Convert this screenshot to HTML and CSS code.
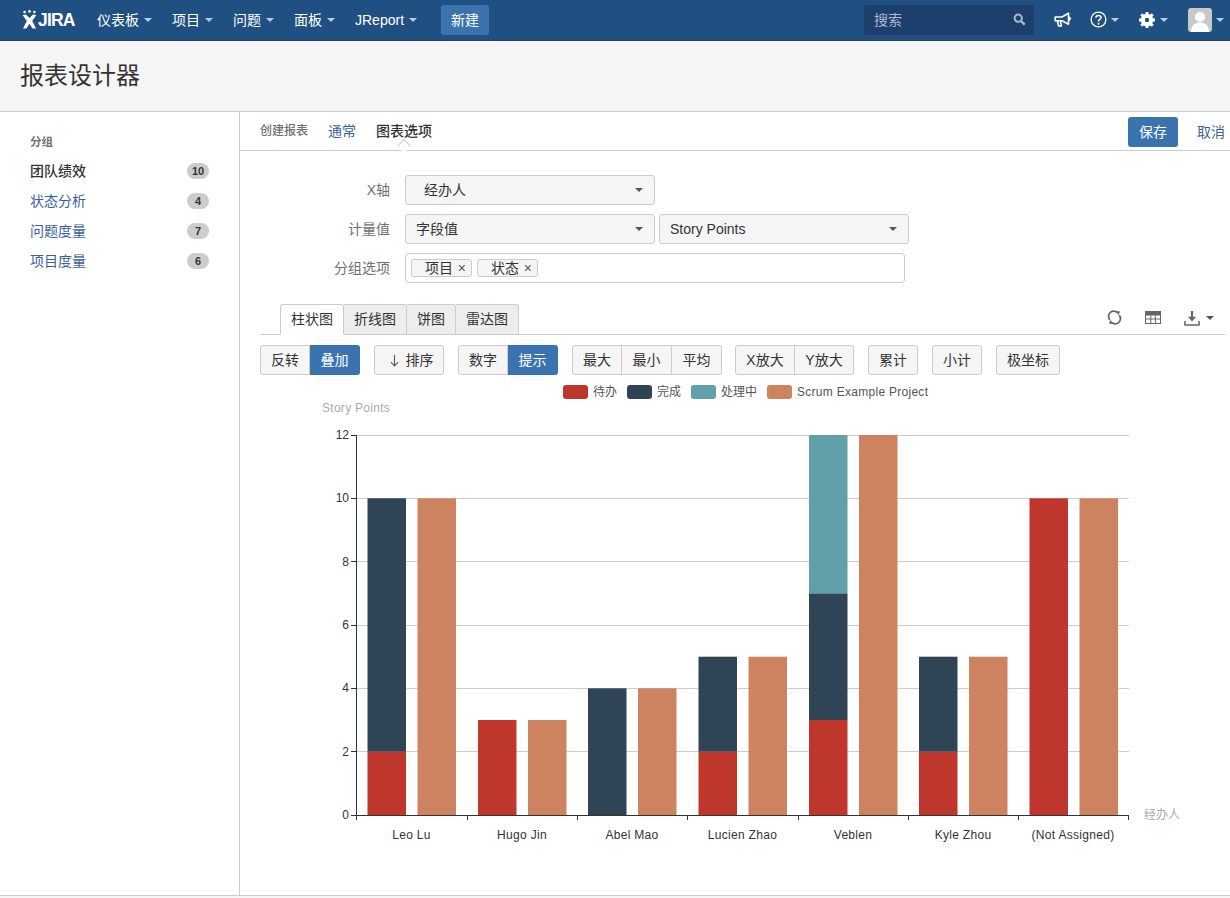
FILE: index.html
```html
<!DOCTYPE html>
<html lang="zh-CN">
<head>
<meta charset="utf-8">
<title>报表设计器</title>
<link rel="stylesheet" href="styles.css">
</head>
<body>
<header class="topbar">
  <a class="logo">
    <svg class="logo-mark" viewBox="0 0 15 19" width="15" height="19"><circle cx="2.6" cy="2" r="1.3"/><circle cx="7.5" cy="1.4" r="1.3"/><circle cx="12.4" cy="2" r="1.3"/><path d="M0.6 5 L4 4.5 L7.5 8 L11 4.5 L14.4 5 L10.2 11 L14 18.4 L10.6 18.4 L7.5 13.8 L4.4 18.4 L1 18.4 L4.8 11 Z"/></svg>
    <span class="logo-text">JIRA</span>
  </a>
  <nav class="nav">
    <a class="nav-item">仪表板<i class="caret"></i></a>
    <a class="nav-item">项目<i class="caret"></i></a>
    <a class="nav-item">问题<i class="caret"></i></a>
    <a class="nav-item">面板<i class="caret"></i></a>
    <a class="nav-item">JReport<i class="caret"></i></a>
  </nav>
  <a class="create">新建</a>
  <div class="tools">
    <div class="search">
      <span>搜索</span>
      <svg viewBox="0 0 14 14" width="13" height="13"><circle cx="5.6" cy="5.6" r="3.9" fill="none" stroke="#a9b8cc" stroke-width="2.2"/><path d="M8.6 8.6 L12.6 12.6" stroke="#a9b8cc" stroke-width="2.6"/></svg>
    </div>
    <a class="tool tool-first"><svg viewBox="0 0 17 16" width="17" height="16"><path d="M1.2 5 H8 L14.5 1.2 V12.2 L8 8.8 H1.2 Z M3.4 9 L4.6 14 H7.4 L6.3 9 M15 5 L16.4 6.6 L15 8.2" fill="none" stroke="#fff" stroke-width="1.6" stroke-linejoin="round"/></svg></a>
    <a class="tool tool-help"><svg viewBox="0 0 17 17" width="17" height="17"><circle cx="8.5" cy="8.5" r="7.4" fill="none" stroke="#fff" stroke-width="1.3"/><path d="M5.9 6.7 C5.9 3.7 11.1 3.7 11.1 6.6 C11.1 8.5 8.5 8.4 8.5 10.4" fill="none" stroke="#fff" stroke-width="1.5"/><circle cx="8.5" cy="12.7" r="1" fill="#fff"/></svg><i class="caret"></i></a>
    <a class="tool tool-gear"><svg viewBox="0 0 18 18" width="18" height="18"><circle cx="9" cy="9" r="4.6" fill="none" stroke="#fff" stroke-width="3.4"/><path d="M9 1 V17 M1 9 H17 M3.3 3.3 L14.7 14.7 M14.7 3.3 L3.3 14.7" stroke="#fff" stroke-width="3"/><circle cx="9" cy="9" r="2.2" fill="#205081"/></svg><i class="caret"></i></a>
    <a class="tool tool-avatar">
      <svg class="avatar" viewBox="0 0 24 24" width="24" height="24"><rect width="24" height="24" rx="3" fill="#c9c9c9"/><circle cx="12" cy="9" r="5" fill="#fff"/><path d="M3 24 C3 16 8 14.5 12 14.5 C16 14.5 21 16 21 24 Z" fill="#fff"/></svg><i class="caret"></i></a>
  </div>
</header>

<div class="page-head"><h1>报表设计器</h1></div>

<div class="content">
  <aside class="side">
    <h2>分组</h2>
    <ul class="side-list">
      <li class="side-item active"><span>团队绩效</span><b class="count">10</b></li>
      <li class="side-item"><span>状态分析</span><b class="count">4</b></li>
      <li class="side-item"><span>问题度量</span><b class="count">7</b></li>
      <li class="side-item"><span>项目度量</span><b class="count">6</b></li>
    </ul>
  </aside>

  <main class="main">
    <div class="steps">
      <span class="steps-title">创建报表</span>
      <a class="step">通常</a>
      <a class="step current">图表选项</a>
      <div class="steps-actions">
        <a class="save">保存</a>
        <a class="cancel">取消</a>
      </div>
    </div>

    <form class="form">
      <div class="row">
        <label>X轴</label>
        <div class="select wide indent">经办人<i class="caret dark"></i></div>
      </div>
      <div class="row">
        <label>计量值</label>
        <div class="select wide">字段值<i class="caret dark"></i></div>
        <div class="select wide">Story Points<i class="caret dark"></i></div>
      </div>
      <div class="row">
        <label>分组选项</label>
        <div class="multi">
          <span class="chip">项目<em>×</em></span>
          <span class="chip">状态<em>×</em></span>
        </div>
      </div>
    </form>

    <div class="chart-tabs">
      <a class="chart-tab selected">柱状图</a>
      <a class="chart-tab">折线图</a>
      <a class="chart-tab t49">饼图</a>
      <a class="chart-tab">雷达图</a>
      <div class="chart-tools">
        <svg viewBox="0 0 16 16" width="15" height="15"><path d="M3 10.5 A5.6 5.6 0 0 1 11.5 3.2 M13 5.5 A5.6 5.6 0 0 1 4.5 12.8" fill="none" stroke="#666" stroke-width="1.9"/><path d="M10 1 L14 1.5 L12 5.5 Z M6 15 L2 14.5 L4 10.5 Z" fill="#666"/></svg>
        <svg class="tool-table" viewBox="0 0 16 13" width="16" height="13"><rect width="16" height="13" fill="#666"/><path d="M1 4.5 H15 V12 H1 Z" fill="#fff"/><path d="M5.8 4.5 V12 M10.4 4.5 V12 M1 8 H15" stroke="#666"/></svg>
        <span class="tool-down"><svg viewBox="0 0 16 16" width="16" height="16"><path d="M8 1 V9" stroke="#666" stroke-width="2.2"/><path d="M3.8 6.8 H12.2 L8 11.4 Z" fill="#666"/><path d="M1 11 V15 H15 V11" fill="none" stroke="#666" stroke-width="1.6"/></svg><i class="caret dark"></i></span>
      </div>
    </div>

    <div class="toolbar">
      <div class="group"><a class="btn">反转</a><a class="btn on">叠加</a></div>
      <div class="group"><a class="btn sort"><svg viewBox="0 0 9 13" width="9" height="13"><path d="M4.5 1 V11.5 M1 8.2 L4.5 12 L8 8.2" fill="none" stroke="#555" stroke-width="1.1"/></svg>排序</a></div>
      <div class="group"><a class="btn">数字</a><a class="btn on">提示</a></div>
      <div class="group"><a class="btn">最大</a><a class="btn">最小</a><a class="btn">平均</a></div>
      <div class="group zoom"><a class="btn">X放大</a><a class="btn">Y放大</a></div>
      <div class="group"><a class="btn">累计</a></div>
      <div class="group"><a class="btn">小计</a></div>
      <div class="group"><a class="btn ext">极坐标</a></div>
    </div>

    <svg class="chart" viewBox="260 380 970 480" width="970" height="480">
      <g class="legend">
        <rect class="c-red" x="563" y="385" width="25" height="14" rx="3"/><text x="593" y="396">待办</text>
        <rect class="c-navy" x="627" y="385" width="25" height="14" rx="3"/><text x="657" y="396">完成</text>
        <rect class="c-teal" x="691" y="385" width="25" height="14" rx="3"/><text x="721" y="396">处理中</text>
        <rect class="c-orange" x="767" y="385" width="25" height="14" rx="3"/><text class="latin" x="797" y="396">Scrum Example Project</text>
      </g>
      <text class="axis-name latin" x="322" y="412">Story Points</text>
      <g class="grid">
        <path d="M356 435.5H1129M356 498.5H1129M356 561.5H1129M356 625.5H1129M356 688.5H1129M356 751.5H1129"/>
      </g>
      <g class="bars">
        <rect class="c-red" x="367.5" y="751.7" width="38.5" height="63.3"/>
        <rect class="c-navy" x="367.5" y="498.3" width="38.5" height="253.4"/>
        <rect class="c-orange" x="417.5" y="498.3" width="38.5" height="316.7"/>

        <rect class="c-red" x="478" y="720" width="38.5" height="95"/>
        <rect class="c-orange" x="528" y="720" width="38.5" height="95"/>

        <rect class="c-navy" x="588" y="688.3" width="38.5" height="126.7"/>
        <rect class="c-orange" x="638" y="688.3" width="38.5" height="126.7"/>

        <rect class="c-red" x="698.5" y="751.7" width="38.5" height="63.3"/>
        <rect class="c-navy" x="698.5" y="656.7" width="38.5" height="95"/>
        <rect class="c-orange" x="748.5" y="656.7" width="38.5" height="158.3"/>

        <rect class="c-red" x="809" y="720" width="38.5" height="95"/>
        <rect class="c-navy" x="809" y="593.3" width="38.5" height="126.7"/>
        <rect class="c-teal" x="809" y="435" width="38.5" height="158.3"/>
        <rect class="c-orange" x="859" y="435" width="38.5" height="380"/>

        <rect class="c-red" x="919" y="751.7" width="38.5" height="63.3"/>
        <rect class="c-navy" x="919" y="656.7" width="38.5" height="95"/>
        <rect class="c-orange" x="969" y="656.7" width="38.5" height="158.3"/>

        <rect class="c-red" x="1029.5" y="498.3" width="38.5" height="316.7"/>
        <rect class="c-orange" x="1079.5" y="498.3" width="38.5" height="316.7"/>
      </g>
      <path class="axis" d="M356.5 435V815.5H1129M351 435.5H356M351 498.5H356M351 561.5H356M351 625.5H356M351 688.5H356M351 751.5H356M351 815.5H356M356.5 815V820M467.5 815V820M577.5 815V820M687.5 815V820M798.5 815V820M908.5 815V820M1018.5 815V820M1128.5 815V820"/>
      <g class="y-labels">
        <text x="349" y="439">12</text>
        <text x="349" y="502">10</text>
        <text x="349" y="566">8</text>
        <text x="349" y="629">6</text>
        <text x="349" y="692">4</text>
        <text x="349" y="756">2</text>
        <text x="349" y="819">0</text>
      </g>
      <g class="x-labels">
        <text x="411.5" y="839">Leo Lu</text>
        <text x="522" y="839">Hugo Jin</text>
        <text x="632" y="839">Abel Mao</text>
        <text x="742.5" y="839">Lucien Zhao</text>
        <text x="853" y="839">Veblen</text>
        <text x="963" y="839">Kyle Zhou</text>
        <text x="1073" y="839">(Not Assigned)</text>
      </g>
      <text class="axis-name" x="1144" y="819">经办人</text>
    </svg>
  </main>
</div>
<footer class="foot"></footer>
</body>
</html>
```

FILE: styles.css
```css
* { box-sizing: border-box; }
html, body { margin: 0; height: 100%; }
body {
  display: flex;
  flex-direction: column;
  height: 898px;
  overflow: hidden;
  background: #fff;
  color: #333;
  font: 14px/20px "Liberation Sans", "Noto Sans CJK SC", sans-serif;
}
a { color: inherit; text-decoration: none; }
h1, h2, ul { margin: 0; padding: 0; font-weight: normal; }
ul { list-style: none; }

.caret {
  display: inline-block;
  width: 0;
  height: 0;
  border: 4px solid transparent;
  border-top-color: #fff;
  border-bottom-width: 0;
  opacity: .7;
}
.caret.dark { border-top-color: #555; opacity: 1; }

/* top bar */
.topbar {
  flex: none;
  display: flex;
  align-items: center;
  height: 41px;
  padding: 0 0 1px 22px;
  background: #205081;
  border-bottom: 1px solid #2a3f5c;
  color: #fff;
}
.logo { display: flex; align-items: center; width: 75px; }
.logo-mark { fill: #fff; margin-right: 1px; }
.logo-text { font-size: 17.5px; font-weight: bold; letter-spacing: -.8px; line-height: 20px; }
.nav { display: flex; gap: 20px; }
.nav-item { display: flex; align-items: center; gap: 5px; }
.create {
  width: 48px;
  height: 30px;
  margin-left: 24px;
  background: #3b73af;
  border-radius: 3px;
  text-align: center;
  line-height: 30px;
}
.tools { display: flex; align-items: center; margin-left: auto; }
.search {
  display: flex;
  align-items: center;
  justify-content: space-between;
  width: 170px;
  height: 30px;
  padding: 0 8px 0 10px;
  background: #1d3f6e;
  border-radius: 3px;
  color: #a9b8cc;
}
.tool { display: flex; align-items: center; gap: 4px; }
.tool-first { margin-left: 20px; }
.tool-help { margin-left: 19px; }
.tool-gear { margin-left: 19px; }
.tool-avatar { margin-left: 20px; width: 42px; }
.avatar { flex: none; }

/* page heading */
.page-head {
  flex: none;
  height: 71px;
  padding: 0 20px;
  background: #f5f5f5;
  border-bottom: 1px solid #ccc;
}
.page-head h1 { font-size: 24px; line-height: 69px; color: #333; }

.content { flex: 1; display: flex; min-height: 0; }

/* sidebar */
.side {
  flex: none;
  width: 240px;
  padding: 22px 30px 0;
  border-right: 1px solid #ccc;
}
.side h2 { font-size: 11.5px; font-weight: bold; line-height: 16px; color: #707070; margin-bottom: 6px; }
.side-item {
  display: flex;
  align-items: center;
  justify-content: space-between;
  height: 30px;
  color: #3b5f9e;
}
.side-item.active { color: #333; font-weight: 500; }
.count {
  width: 22px;
  height: 16px;
  background: #ccc;
  border-radius: 8px;
  color: #333;
  font-size: 11px;
  line-height: 16px;
  text-align: center;
}

/* main */
.main { flex: 1; min-width: 0; }
.steps {
  display: flex;
  align-items: center;
  height: 39px;
  padding-left: 20px;
  border-bottom: 1px solid #ccc;
}
.steps-title { font-size: 12px; font-weight: 500; color: #707070; width: 68px; }
.step { color: #3b5f9e; margin-right: 20px; }
.step.current { color: #333; font-weight: 500; position: relative; }
.step.current::after {
  content: "";
  position: absolute;
  left: 23px;
  bottom: -10px;
  width: 9px;
  height: 9px;
  background: #fff;
  border-left: 1px solid #ccc;
  border-top: 1px solid #ccc;
  transform: rotate(45deg);
}
.steps-actions { display: flex; align-items: center; margin: 2px 0 0 auto; padding-right: 5px; }
.save {
  width: 50px;
  height: 30px;
  background: #3b73af;
  border-radius: 3px;
  color: #fff;
  line-height: 30px;
  text-align: center;
}
.cancel { margin-left: 19px; color: #3b5f9e; }

/* form */
.form { padding-top: 24px; }
.row { display: flex; align-items: center; gap: 4px; height: 30px; margin-bottom: 9px; }
.row label { width: 150px; margin-right: 11px; text-align: right; color: #707070; }
.select {
  display: flex;
  align-items: center;
  justify-content: space-between;
  height: 30px;
  padding: 0 11px 0 10px;
  background: #f5f5f5;
  border: 1px solid #ccc;
  border-radius: 3px;
}
.select.wide { width: 250px; }
.select.indent { padding-left: 18px; }
.multi {
  display: flex;
  align-items: center;
  gap: 5px;
  width: 500px;
  height: 30px;
  padding: 0 5px;
  border: 1px solid #ccc;
  border-radius: 3px;
}
.chip {
  display: flex;
  align-items: center;
  justify-content: space-between;
  width: 61px;
  height: 18px;
  padding: 0 5px 0 13px;
  background: #f5f5f5;
  border: 1px solid #ccc;
  border-radius: 3px;
  line-height: 16px;
}
.chip em { font-style: normal; color: #555; }

/* chart tabs */
.chart-tabs {
  display: flex;
  align-items: flex-end;
  height: 31px;
  margin: 21px 5px 0 20px;
  padding-left: 20px;
  border-bottom: 1px solid #ccc;
}
.chart-tab {
  width: 63px;
  height: 31px;
  margin-bottom: -1px;
  background: #ededed;
  border: 1px solid #ccc;
  border-left: 0;
  border-radius: 0 3px 0 0;
  text-align: center;
  line-height: 29px;
}
.chart-tab.selected {
  width: 64px;
  background: #fff;
  border-left: 1px solid #ccc;
  border-bottom-color: #fff;
  border-radius: 3px 3px 0 0;
}
.chart-tab.t49 { width: 49px; }
.chart-tools {
  display: flex;
  align-items: center;
  gap: 23px;
  height: 27px;
  margin-left: auto;
  padding-right: 11px;
  align-self: flex-start;
}
.tool-down { display: flex; align-items: center; gap: 6px; }

/* toolbar */
.toolbar { display: flex; gap: 14px; margin: 10px 0 0 20px; }
.group { display: flex; }
.btn {
  width: 50px;
  height: 30px;
  background: #f5f5f5;
  border: 1px solid #ccc;
  border-left-width: 0;
  line-height: 28px;
  text-align: center;
}
.btn:first-child { border-left-width: 1px; border-radius: 3px 0 0 3px; }
.btn:last-child { border-radius: 0 3px 3px 0; }
.btn:only-child { border-radius: 3px; }
.btn.on { background: #3b73af; border-color: #3b73af; color: #fff; }
.btn.sort {
  display: flex;
  align-items: center;
  justify-content: center;
  gap: 7px;
  width: 70px;
  padding-left: 5px;
}
.btn.ext { width: 64px; }
.group.zoom { margin-left: -1px; }
.group.zoom .btn { width: 60px; }
.group.zoom .btn:last-child { width: 59px; }

/* chart */
.chart { display: block; margin: 5px 0 0 20px; }
.chart text { font-size: 12px; }
.legend text { fill: #555; }
.chart .latin { letter-spacing: .28px; }
.axis-name { fill: #aaa; }
.grid path { fill: none; stroke: #ccc; stroke-width: 1; }
.axis { fill: none; stroke: #333; stroke-width: 1; }
.y-labels text { fill: #333; text-anchor: end; }
.x-labels text { fill: #333; text-anchor: middle; letter-spacing: .3px; }
.c-red { fill: #bf372c; }
.c-navy { fill: #2f4454; }
.c-teal { fill: #61a0a8; }
.c-orange { fill: #ce8360; }

.foot {
  flex: none;
  height: 3px;
  background: #f5f5f5;
  border-top: 1px solid #ccc;
}
```
